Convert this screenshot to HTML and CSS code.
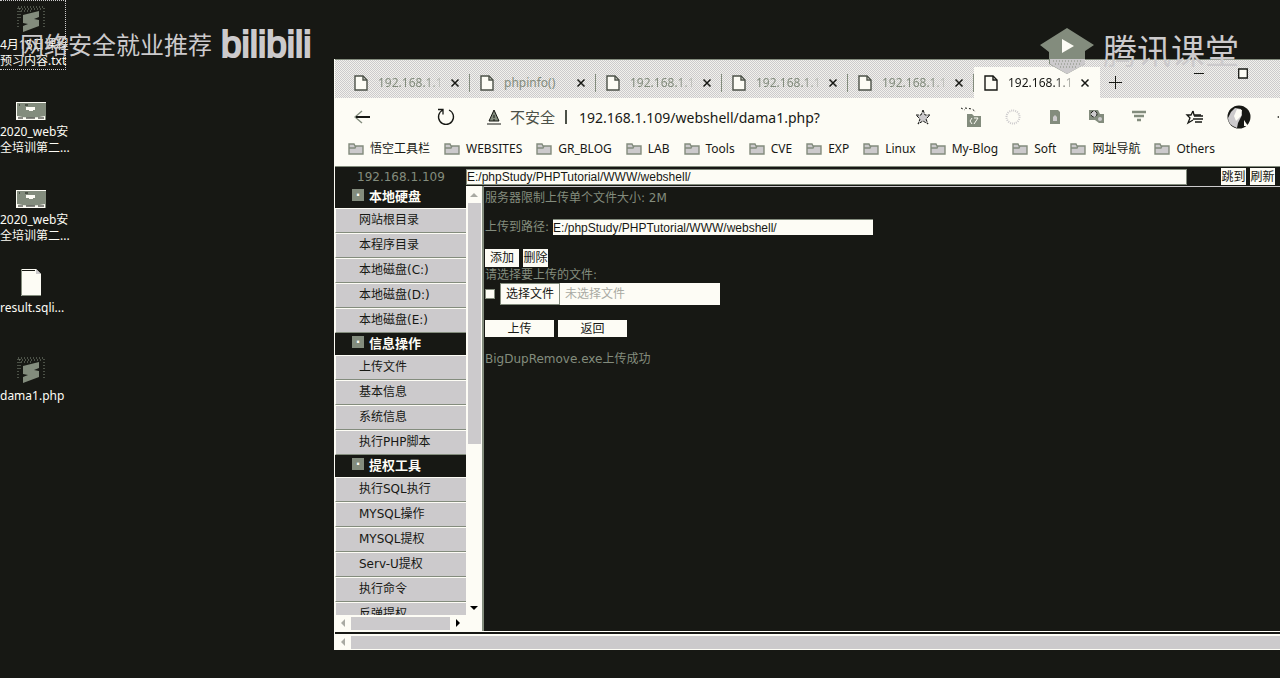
FILE: index.html
```html
<!DOCTYPE html>
<html lang="zh-CN">
<head>
<meta charset="utf-8">
<title>192.168.1.109</title>
<link rel="stylesheet" href="styles.css">
</head>
<body>
<svg class="defs" aria-hidden="true">
  <symbol id="page" viewBox="0 0 14 16"><path d="M1 1h8l4 4v10H1z" fill="#fdfcf5" stroke="currentColor" stroke-width="1.4"/><path d="M9 1v4h4" fill="none" stroke="currentColor" stroke-width="1.4"/></symbol>
  <symbol id="folder" viewBox="0 0 16 12"><path d="M1 1h5l1 2h8v8H1z" fill="#cccacc" stroke="#838c7d" stroke-width="1.4"/><path d="M1 5h6l1-2" fill="none" stroke="#838c7d" stroke-width="1.4"/></symbol>
  <symbol id="close" viewBox="0 0 10 10"><path d="M1.500 1.500l7 7m0-7l-7 7" stroke="#171814" stroke-width="1.500"/></symbol>
  <symbol id="sublime" viewBox="0 0 28 26"><path d="M1 1h26v20" fill="none" stroke="#838c7d" stroke-dasharray="1 2"/><path d="M2 3h24M4 5h10M1 2v20M3 2v10" fill="none" stroke="#838c7d" stroke-dasharray="1 2"/><path d="M6 9L22 5v6l-5 2 5 1v6L6 26v-6l5-2-5-1z" fill="#838c7d"/></symbol>
  <symbol id="archive" viewBox="0 0 30 18"><path d="M0 0h30v18H0z" fill="#838c7d"/><path d="M0 .500h30M.500 0v18" stroke="#fdfcf5"/><path d="M1 14q14 3 28 0v4H1z" fill="#fdfcf5"/><path d="M2 16h5m3 0h9m3 0h6M3 3h1m5 0h3" stroke="#171814"/><path d="M10 5h9v3h-2v1h-4V8h-3z" fill="#fdfcf5"/></symbol>
</svg>

<div class="desktop">
  <div class="icons">
    <div class="shortcut selected"><span class="pic"><svg width="28" height="26"><use href="#sublime"/></svg></span><span>4月15日课程<br>预习内容.txt</span></div>
    <div class="shortcut low"><span class="pic"><svg width="30" height="18"><use href="#archive"/></svg></span><span>2020_web安<br>全培训第二...</span></div>
    <div class="shortcut low"><span class="pic"><svg width="30" height="18"><use href="#archive"/></svg></span><span>2020_web安<br>全培训第二...</span></div>
    <div class="shortcut"><span class="pic"><svg width="20" height="27" viewBox="0 0 20 27"><path d="M0 0h15l5 5v22H0z" fill="#fdfcf5"/><path d="M15 0v5h5z" fill="#cccacc"/><path d="M1 1.500h13" stroke="#171814"/><path d="M.500 0v26.500H20" fill="none" stroke="#838c7d"/></svg></span><span>result.sqli...</span></div>
    <div class="shortcut"><span class="pic"><svg width="28" height="26"><use href="#sublime"/></svg></span><span>dama1.php</span></div>
  </div>

  <div class="mark mark-left"><span>网络安全就业推荐</span><span class="bili">bilibili</span></div>

  <section class="window">
    <header class="tabs">
      <div class="tab"><svg class="doc"><use href="#page"/></svg><span>192.168.1.1</span><button aria-label="关闭"><svg><use href="#close"/></svg></button></div>
      <div class="tab"><svg class="doc"><use href="#page"/></svg><span>phpinfo()</span><button aria-label="关闭"><svg><use href="#close"/></svg></button></div>
      <div class="tab"><svg class="doc"><use href="#page"/></svg><span>192.168.1.1</span><button aria-label="关闭"><svg><use href="#close"/></svg></button></div>
      <div class="tab"><svg class="doc"><use href="#page"/></svg><span>192.168.1.1</span><button aria-label="关闭"><svg><use href="#close"/></svg></button></div>
      <div class="tab"><svg class="doc"><use href="#page"/></svg><span>192.168.1.1</span><button aria-label="关闭"><svg><use href="#close"/></svg></button></div>
      <div class="tab active"><svg class="doc"><use href="#page"/></svg><span>192.168.1.1</span><button aria-label="关闭"><svg><use href="#close"/></svg></button></div>
      <button class="new" aria-label="新标签页"><svg width="13" height="13" viewBox="0 0 13 13"><path d="M6.500 0v13M0 6.500h13" stroke="#171814"/></svg></button>
      <div class="controls">
        <button aria-label="最小化"><svg width="10" height="11" viewBox="0 0 10 11"><path d="M0 5.500h10" stroke="#171814"/></svg></button>
        <button aria-label="最大化"><svg width="10" height="11" viewBox="0 0 10 11"><path d="M.700 1h8.600v9H.700z" fill="#fdfcf5" stroke="#171814" stroke-width="1.300"/></svg></button>
      </div>
    </header>

    <div class="toolbar">
      <button aria-label="后退"><svg width="16" height="14" viewBox="0 0 16 14"><path d="M8 1L1 7l7 6" fill="none" stroke="#838c7d" stroke-width="1.400"/><path d="M2 7h14" stroke="#171814" stroke-width="2"/></svg></button>
      <button class="reload" aria-label="刷新"><svg width="18" height="18" viewBox="0 0 18 18"><path d="M6 2a7.500 7.500 0 1 0 6 0M1 1.500h5v5" fill="none" stroke="#171814" stroke-width="1.300"/></svg></button>
      <div class="address">
        <svg width="14" height="15" viewBox="0 0 14 15"><path d="M7 0l5 11H2z" fill="#838c7d"/><path d="M7 0L2 11h10zM0 14h14M7 5v3m0 1v2" fill="none" stroke="#171814"/></svg>
        <span class="unsafe">不安全</span><i></i><input class="url" aria-label="地址" value="192.168.1.109/webshell/dama1.php?">
      </div>
      <div class="tools">
        <svg viewBox="0 0 20 20" class="star"><path d="M10 3l2 5h5l-4 4 2 5-5-3-5 3 2-5-4-4h5z" fill="#cccacc" stroke="#171814" stroke-dasharray="3 1"/></svg>
        <svg viewBox="0 0 20 20"><path d="M0 1l4 2m0-2l7 1 4 3" stroke="#171814" stroke-dasharray="2 2" fill="none"/><path d="M6 7h5l2 2h7v11H6z" fill="#838c7d"/><path d="M11 11l-2 3 2 3m2-6h4l-4 6" fill="none" stroke="#fdfcf5"/></svg>
        <svg viewBox="0 0 20 20"><circle cx="10" cy="10" r="6.500" fill="none" stroke="#cccacc" stroke-width="2" stroke-dasharray="1 1"/></svg>
        <svg viewBox="0 0 20 20"><path d="M5 3h8l2 2v12H5z" fill="#838c7d"/><path d="M8 14v-4l2-2 2 2v4z" fill="#cccacc"/></svg>
        <svg viewBox="0 0 20 20"><path d="M2 3h9l2 4h4v9h-5l-4-3H2z" fill="#838c7d"/><circle cx="7" cy="7" r="3" fill="#cccacc" stroke="#171814" stroke-dasharray="3 2"/><circle cx="13" cy="12" r="2" fill="#cccacc"/></svg>
        <svg viewBox="0 0 20 20"><path d="M3 5h14M5 9h10M8 13h4" stroke="#838c7d" stroke-width="2.500"/></svg>
        <svg viewBox="0 0 20 20" class="fav"><path d="M8 4l1 4h7M8 4L6 8H2l3 3-2 5 5-3" fill="none" stroke="#171814" stroke-width="1.300"/><path d="M9 9h9M8 12h10M10 15h7" stroke="#171814" stroke-width="1.500"/></svg>
        <svg viewBox="0 0 24 24" class="avatar"><circle cx="12" cy="12" r="11.500" fill="#171814"/><path d="M8 3l6 1 1 6-4 8-1 5q-9-3-9-10l3-6z" fill="#cccacc"/><path d="M10 4l5 1-1 6-5 5-2-5z" fill="#fdfcf5"/><path d="M17 15l4 6h-4z" fill="#fdfcf5"/></svg>
      </div>
      <button aria-label="更多"><svg width="3" height="4" viewBox="0 0 3 4"><path d="M0 2l2-1v2z" fill="#171814"/></svg></button>
    </div>

    <nav class="bookmarks">
      <a href="#"><svg><use href="#folder"/></svg>悟空工具栏</a>
      <a href="#"><svg><use href="#folder"/></svg>WEBSITES</a>
      <a href="#"><svg><use href="#folder"/></svg>GR_BLOG</a>
      <a href="#"><svg><use href="#folder"/></svg>LAB</a>
      <a href="#"><svg><use href="#folder"/></svg>Tools</a>
      <a href="#"><svg><use href="#folder"/></svg>CVE</a>
      <a href="#"><svg><use href="#folder"/></svg>EXP</a>
      <a href="#"><svg><use href="#folder"/></svg>Linux</a>
      <a href="#"><svg><use href="#folder"/></svg>My-Blog</a>
      <a href="#"><svg><use href="#folder"/></svg>Soft</a>
      <a href="#"><svg><use href="#folder"/></svg>网址导航</a>
      <a href="#"><svg><use href="#folder"/></svg>Others</a>
    </nav>

    <form class="pathbar">
      <label for="path">192.168.1.109</label>
      <input id="path" value="E:/phpStudy/PHPTutorial/WWW/webshell/">
      <div class="go"><button type="button">跳到</button><button type="button">刷新</button></div>
    </form>

    <div class="frames">
      <aside>
        <div class="menu">
          <h2>本地硬盘</h2>
          <a href="#">网站根目录</a><a href="#">本程序目录</a><a href="#">本地磁盘(C:)</a><a href="#">本地磁盘(D:)</a><a href="#">本地磁盘(E:)</a>
          <h2>信息操作</h2>
          <a href="#">上传文件</a><a href="#">基本信息</a><a href="#">系统信息</a><a href="#">执行PHP脚本</a>
          <h2>提权工具</h2>
          <a href="#">执行SQL执行</a><a href="#">MYSQL操作</a><a href="#">MYSQL提权</a><a href="#">Serv-U提权</a><a href="#">执行命令</a><a href="#">反弹提权</a>
        </div>
        <div class="hbar"><svg class="pale" viewBox="0 0 6 8"><path d="M5 0v8L1 4z"/></svg><b></b><svg viewBox="0 0 6 8"><path d="M1 0v8l4-4z"/></svg></div>
      </aside>
      <div class="vbar"><svg class="pale" viewBox="0 0 8 6"><path d="M0 5h8L4 1z"/></svg><b></b><svg viewBox="0 0 8 6"><path d="M0 1h8L4 5z"/></svg></div>
      <main>
        <p>服务器限制上传单个文件大小: 2M</p>
        <p class="row target"><label for="target">上传到路径:</label><input id="target" value="E:/phpStudy/PHPTutorial/WWW/webshell/"></p>
        <div class="row edit"><button type="button" class="add">添加</button><button type="button">删除</button></div>
        <p>请选择要上传的文件:</p>
        <div class="row pick"><input type="checkbox" aria-label="选择此文件"><label class="file"><input type="file"><span class="choose">选择文件</span><span class="none">未选择文件</span></label></div>
        <div class="row send"><button type="button">上传</button><button type="button">返回</button></div>
        <p>BigDupRemove.exe上传成功</p>
      </main>
    </div>
    <div class="hbar outer"><svg class="pale" viewBox="0 0 6 8"><path d="M5 0v8L1 4z"/></svg><b></b></div>
  </section>

  <div class="mark mark-right">
    <svg width="54" height="46" viewBox="0 0 54 46"><path d="M27 0l27 17-9 6v13L27 46 9 36V24L0 17z" fill="#838c7d"/><path d="M10 31h35v5L27 46 10 36z" fill="#cccacc"/><path d="M13 33h30M15 36h25M20 39h16" stroke="#838c7d" stroke-dasharray="1 2"/><path d="M22 11l12 7-12 7z" fill="#fdfcf5"/></svg>
    <span>腾讯课堂</span>
  </div>
</div>
</body>
</html>
```
FILE: styles.css
```css
:root {
  --ink: #171814;
  --paper: #fdfcf5;
  --silver: #cccacc;
  --moss: #838c7d;
}
* { box-sizing: border-box; }
body {
  margin: 0;
  background: var(--ink);
  color: var(--paper);
  font: 12px/16px "Noto Sans", "Noto Sans CJK SC", sans-serif;
}
button, input { font: inherit; color: inherit; margin: 0; padding: 0; border: 0; border-radius: 0; background: none; min-width: 0; }
a { color: inherit; text-decoration: none; }
p, h2 { margin: 0; }
svg { display: block; flex: none; }
.defs { position: absolute; width: 0; height: 0; }
.desktop { position: relative; height: 100vh; min-height: 480px; overflow: hidden; }

.icons { display: flex; flex-direction: column; width: 66px; }
.shortcut { height: 88px; padding-right: 4px; text-align: center; white-space: nowrap; }
.shortcut .pic { display: flex; height: 36px; align-items: center; justify-content: center; }
.shortcut.low .pic { align-items: flex-end; padding-bottom: 15px; }
.shortcut.low .pic { padding-bottom: 4px; }
.selected { height: 70px; margin-bottom: 18px; border: 1px dotted var(--silver); border-left: 0; }

.mark { position: absolute; display: flex; align-items: center; color: var(--silver); white-space: nowrap; }
.mark-left { left: 20px; top: 22px; gap: 9px; height: 46px; font-size: 24px; line-height: 40px; }
.bili { font-family: "Liberation Sans", sans-serif; font-size: 37px; -webkit-text-stroke: 2px var(--silver); }
.mark-right { right: 41px; top: 26px; gap: 9px; height: 50px; font-size: 34px; line-height: 50px; }

.window { position: absolute; left: 334px; right: 0; top: 59px; bottom: 28px; display: flex; flex-direction: column; overflow: hidden; border-left: 1px solid var(--paper); background: var(--paper); color: var(--ink); }
.tabs { display: flex; flex: none; align-items: flex-end; height: 39px; padding-left: 9px; border-top: 1px solid var(--moss); background: repeating-conic-gradient(var(--silver) 0 25%, #f2f1ec 0 50%) 0 0 / 2px 2px; }
.tab { display: flex; align-items: center; flex: 0 1 126px; height: 31px; padding: 0 10px; color: var(--moss); position: relative; }
.tab:not(.active)::after { content: ""; position: absolute; right: 0; top: 7px; height: 18px; width: 1px; background: var(--moss); }
.tab .doc { width: 14px; height: 16px; margin-right: 10px; color: #4c5148; }
.tab span { flex: 1; overflow: hidden; white-space: nowrap; mask-image: linear-gradient(90deg, #000 65%, transparent 95%); }
.tab:nth-child(2) span { mask-image: none; }
.tab button svg { width: 10px; height: 10px; }
.tab.active { background: var(--paper); color: var(--ink); }
.tab.active .doc { color: var(--ink); }
.new { height: 31px; margin-left: 9px; }
.controls { display: flex; gap: 34px; margin-left: auto; padding-right: 32px; align-self: flex-start; padding-top: 8px; }

.toolbar { display: flex; flex: none; align-items: center; height: 38px; padding-left: 19px; }
.reload { margin-left: 67px; }
.address { display: flex; flex: 1; align-items: center; min-width: 0; margin-left: 32px; font-size: 14px; }
.unsafe { margin-left: 9px; color: #4c5148; font-size: 15px; }
.address i { width: 2px; height: 14px; margin: 0 12px 0 10px; background: #4c5148; }
.url { flex: 1; height: 24px; }
.tools { display: flex; align-items: center; gap: 22px; padding-right: 26px; }
.tools svg { width: 20px; height: 20px; }
.tools .star { margin-right: 6px; }
.tools .fav { margin-left: 14px; }
.tools .avatar { width: 24px; height: 24px; }
.bookmarks { display: flex; flex: none; gap: 14px; height: 30px; padding: 4px 0 0 13px; white-space: nowrap; }
.bookmarks a { display: flex; gap: 6px; height: 18px; align-items: center; }
.bookmarks svg { width: 16px; height: 12px; }

.pathbar { display: flex; flex: none; align-items: center; height: 20px; background: var(--ink); border-top: 1px solid var(--moss); font-family: "DejaVu Sans", "Noto Sans CJK SC", sans-serif; }
.pathbar label { width: 131px; padding-left: 22px; color: var(--moss); }
.pathbar > input { flex: 1; height: 16px; border: 1px solid var(--moss); background: var(--paper); font-family: "Liberation Sans", sans-serif; }
.go { display: flex; gap: 4px; padding: 0 5px 0 34px; }
.go button { height: 17px; width: 25px; background: var(--paper); }

.frames { display: flex; flex: 1; min-height: 0; background: var(--ink); border-bottom: 1px solid var(--paper); font-family: "DejaVu Sans", "Noto Sans CJK SC", sans-serif; }
aside { display: flex; flex-direction: column; width: 131px; }
.menu { flex: 1; min-height: 0; overflow: hidden; }
.menu h2 { display: flex; align-items: center; gap: 5px; height: 22px; padding-left: 17px; color: var(--paper); font-size: 13px; line-height: 22px; }
.menu h2::before { content: "·"; width: 12px; height: 12px; margin-bottom: 4px; background: var(--moss); font-size: 12px; line-height: 12px; text-align: center; }
.menu a { display: block; height: 25px; padding-left: 23px; line-height: 22px; background: var(--silver); border-top: 1px solid var(--paper); border-left: 1px solid var(--paper); border-bottom: 1px solid var(--moss); }
.hbar { display: flex; flex: none; align-items: center; height: 16px; padding: 2px 5px; gap: 5px; background: var(--paper); }
.hbar svg { width: 6px; height: 8px; }
.hbar b { flex: 1; height: 13px; background: var(--silver); }
.pale { fill: #a9aaa3; }
.vbar { display: flex; flex-direction: column; align-items: center; gap: 5px; width: 18px; padding: 6px 0 20px; background: var(--paper); border-right: 2px solid var(--moss); }
.vbar svg { width: 8px; height: 6px; }
.vbar b { width: 13px; height: 241px; margin-bottom: auto; background: var(--silver); }
main { flex: 1; min-width: 0; border-top: 1px solid var(--silver); padding: 3px 1px; color: var(--moss); }
.row { display: flex; align-items: center; }
main button { background: var(--paper); color: var(--ink); }
.target { height: 18px; margin-top: 12px; gap: 4px; }
.target input { flex: 0 1 320px; height: 16px; border-top: 1px solid var(--moss); background: var(--paper); color: var(--ink); font-family: "Liberation Sans", sans-serif; }
.edit { margin-top: 13px; gap: 4px; }
.edit button { height: 18px; width: 25px; }
.edit .add { width: 34px; }
.pick { gap: 5px; }
.pick > input { appearance: none; width: 10px; height: 10px; background: var(--paper); border: 1px solid var(--moss); }
.file { display: flex; flex: 0 1 220px; height: 22px; background: var(--paper); line-height: 20px; }
.file input { position: absolute; width: 1px; height: 1px; opacity: 0; }
.choose { padding: 0 5px; border: 1px solid var(--moss); color: var(--ink); }
.none { padding: 1px 5px; color: #a9aaa3; }
.send { gap: 4px; margin: 15px 0 14px; }
.send button { height: 17px; width: 69px; }
.outer { height: 18px; border-top: 2px solid var(--ink); padding-right: 0; }
```
